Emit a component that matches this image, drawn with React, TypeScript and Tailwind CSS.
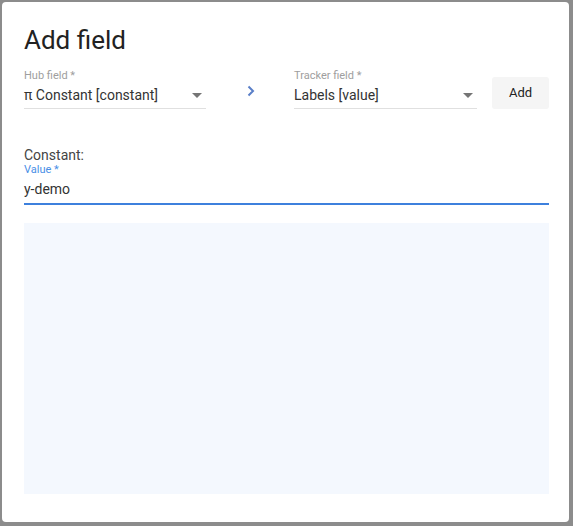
import React from 'react';

const Caret = () => (
  <svg width="10" height="5" viewBox="0 0 10 5" className="shrink-0">
    <path d="M0 0 L10 0 L5 5 Z" fill="#757575" />
  </svg>
);

const SelectField: React.FC<{ label: string; value: string; width: string }> = ({ label, value, width }) => (
  <div className={`flex flex-col ${width}`}>
    <span className="text-[11px] leading-[14px] text-[#9e9e9e]">{label}</span>
    <div className="flex items-center justify-between h-[26px] border-b border-[#e0e0e0] pr-[4px]">
      <span className="text-[14px] text-[#333]">{value}</span>
      <Caret />
    </div>
  </div>
);

export default function App() {
  return (
    <div className="w-[573px] h-[526px] bg-[#8c8c8c] pt-[2px] pl-[2px] pr-[4px] pb-[4px]" style={{ fontFamily: 'Roboto, "Liberation Sans", sans-serif' }}>
      <div className="h-full bg-white rounded-[4px] pl-[22px] pr-[20px] pt-[22px] flex flex-col">
        <h1 className="text-[26px] leading-[32px] text-[#222] font-normal">Add field</h1>

        <div className="flex items-start mt-[13px]">
          <SelectField label="Hub field *" value="π Constant [constant]" width="w-[182px]" />
          <div className="w-[88px] flex justify-center pt-[16px] pl-[2px]">
            <svg width="10" height="12" viewBox="0 0 10 12">
              <path d="M2.5 1.5 L7 6 L2.5 10.5" stroke="#5a7fc8" strokeWidth="2" fill="none" />
            </svg>
          </div>
          <SelectField label="Tracker field *" value="Labels [value]" width="w-[183px]" />
          <button className="ml-[15px] mt-[8px] w-[57px] h-[32px] bg-[#f5f5f5] rounded-[3px] text-[13px] text-[#222]">Add</button>
        </div>

        <div className="mt-[38px] text-[14px] leading-[17px] text-[#444]">Constant:</div>
        <div className="text-[11px] leading-[11px] text-[#4a8fe6]">Value *</div>
        <div className="h-[30px] flex items-center text-[14px] text-[#333] border-b-2 border-[#3d80dd]">y-demo</div>

        <div className="mt-[18px] h-[271px] bg-[#f4f8fe]"></div>
      </div>
    </div>
  );
}
